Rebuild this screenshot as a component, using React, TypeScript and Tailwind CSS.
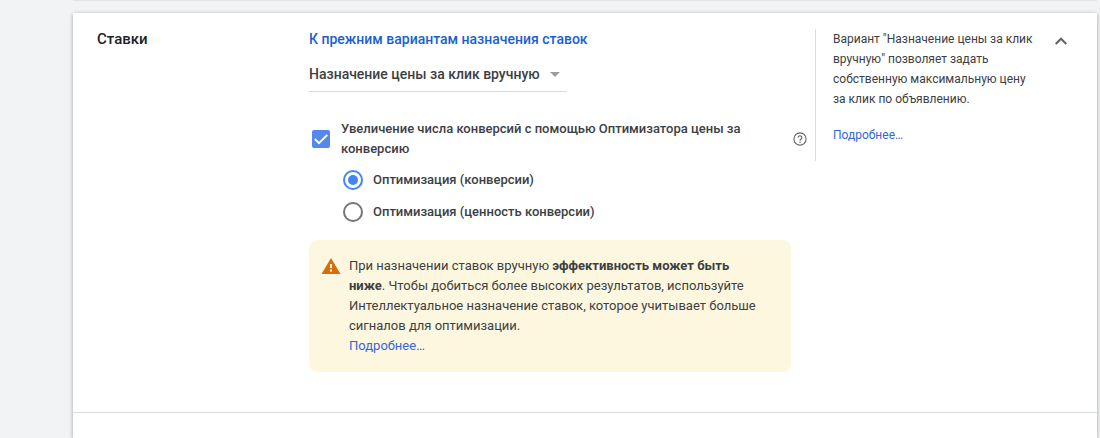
import { useState } from "react";

const goals = [
  { id: "conversions", label: "Оптимизация (конверсии)" },
  { id: "value", label: "Оптимизация (ценность конверсии)" },
];

function HelpIcon() {
  return (
    <svg className="block size-3.5" viewBox="0 0 14 14" fill="none" stroke="#5f6368" aria-hidden="true">
      <circle cx="7" cy="7" r="6.1" strokeWidth="1.1" />
      <path d="M5.200 5.500a1.800 1.800 0 1 1 2.900 1.500C7.400 7.600 7 7.900 7 8.800" strokeWidth="1.100" />
      <path d="M7 9.800v1.200" strokeWidth="1.200" />
    </svg>
  );
}

function WarningIcon() {
  return (
    <svg className="mt-0.5 h-4 w-5 shrink-0" viewBox="0 0 20 16" aria-hidden="true">
      <path d="M10 0 .5 16h19z" fill="#d56e0c" />
      <path d="M9 6h2v4H9zM9 11.500h2v2H9z" fill="#fef7e0" />
    </svg>
  );
}

function CheckOption() {
  const [checked, setChecked] = useState(true);
  return (
    <div className="flex items-center">
      <label className="flex flex-1 items-center gap-[11px] pl-[3px]">
        <span className="grid shrink-0 place-items-center">
          <input
            type="checkbox"
            checked={checked}
            onChange={(e) => setChecked(e.target.checked)}
            className="peer col-start-1 row-start-1 size-[18px] appearance-none rounded-xs border-2 border-[#757575] checked:border-[#5488ec] checked:bg-[#5488ec]"
          />
          <svg
            className="pointer-events-none invisible col-start-1 row-start-1 size-[18px] peer-checked:visible"
            viewBox="0 0 18 18"
            fill="none"
            stroke="#fff"
            strokeWidth="2"
            aria-hidden="true"
          >
            <path d="M2.800 9l4.200 4.200L15.300 4.900" />
          </svg>
        </span>
        <span className="max-w-[430px] text-[13px] leading-5 font-medium">
          Увеличение числа конверсий с помощью Оптимизатора цены за конверсию
        </span>
      </label>
      <button type="button" aria-label="Справка" className="shrink-0">
        <HelpIcon />
      </button>
    </div>
  );
}

function GoalOptions() {
  const [goal, setGoal] = useState("conversions");
  return (
    <div className="mt-[11px] flex flex-col gap-3 pl-[34px]">
      {goals.map(({ id, label }) => (
        <label key={id} className="flex items-center gap-2.5 text-[13px] leading-5 font-medium">
          <span className="grid shrink-0 place-items-center">
            <input
              type="radio"
              name="goal"
              checked={goal === id}
              onChange={() => setGoal(id)}
              className="peer col-start-1 row-start-1 size-5 appearance-none rounded-full border-2 border-[#757575] checked:border-[#4285f4]"
            />
            <span className="pointer-events-none invisible col-start-1 row-start-1 size-2.5 rounded-full bg-[#4285f4] peer-checked:visible" />
          </span>
          {label}
        </label>
      ))}
    </div>
  );
}

export default function App() {
  return (
    <div className="flex min-h-screen flex-col gap-3 overflow-hidden bg-[#f1f3f4] pr-[3px] pl-[73px] font-[Roboto,sans-serif] text-[#3c4043]">
      <div className="h-px bg-[#e4e5e6]" />
      <main className="flex flex-1 flex-col bg-white shadow-[0_1px_4px_rgba(0,0,0,0.35)]">
        <section className="flex border-b border-[#dadce0] pt-4 pr-[26px] pb-10 pl-6">
          <h2 className="w-[212px] shrink-0 text-[15px] leading-5 font-medium text-[#202124]">Ставки</h2>

          <div className="min-w-0 flex-1 pr-2">
            <a href="#previous" className="block text-sm leading-5 font-medium text-[#1a5fd0]">
              К прежним вариантам назначения ставок
            </a>

            <div className="mt-2 grid w-[258px] items-center border-b border-[#dadce0]">
              <select
                aria-label="Стратегия назначения ставок"
                className="col-start-1 row-start-1 h-[34px] w-full appearance-none bg-transparent text-sm font-medium"
              >
                <option>Назначение цены за клик вручную</option>
              </select>
              <svg
                className="pointer-events-none col-start-1 row-start-1 mr-[7px] h-[5px] w-2.5 justify-self-end"
                viewBox="0 0 10 5"
                fill="#9e9e9e"
                aria-hidden="true"
              >
                <path d="M0 0h10L5 5z" />
              </svg>
            </div>

            <div className="mt-[27px]">
              <CheckOption />
              <GoalOptions />
            </div>

            <div className="mt-[18px] mr-4 flex gap-2 rounded-lg bg-[#fef7e0] py-4 pr-6 pl-3">
              <WarningIcon />
              <p className="text-[13px] leading-5">
                При назначении ставок вручную <b className="font-bold">эффективность может быть ниже</b>. Чтобы
                добиться более высоких результатов, используйте Интеллектуальное назначение ставок, которое
                учитывает больше сигналов для оптимизации.
                <br />
                <a href="#bidding" className="text-[#3367d6]">
                  Подробнее…
                </a>
              </p>
            </div>
          </div>

          <aside className="w-[222px] shrink-0 self-start border-l border-[#dadce0] pb-4 pl-[17px] text-xs leading-5">
            <p>
              Вариант "Назначение цены за клик вручную" позволяет задать собственную максимальную цену за клик по
              объявлению.
            </p>
            <a href="#details" className="mt-4 block text-[#3367d6]">
              Подробнее…
            </a>
          </aside>

          <button type="button" aria-label="Свернуть" className="ml-3.5 flex size-5 shrink-0 items-center justify-center">
            <svg className="mt-1 h-2 w-3" viewBox="0 0 12 8" fill="none" stroke="#616161" strokeWidth="2" aria-hidden="true">
              <path d="M.7 7L6 1.700 11.300 7" />
            </svg>
          </button>
        </section>
      </main>
    </div>
  );
}
